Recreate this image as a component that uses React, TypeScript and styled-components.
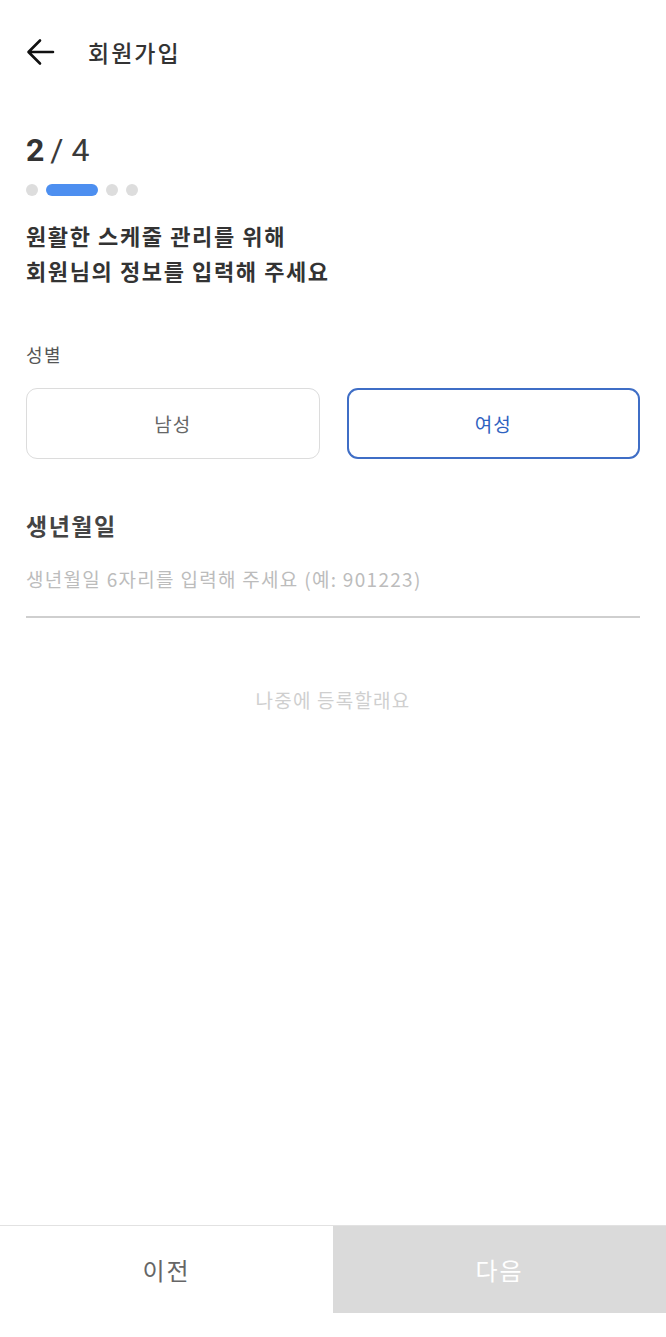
import React, { useState } from 'react'
import styled, { createGlobalStyle } from 'styled-components'

const GlobalStyle = createGlobalStyle`
  html, body {
    margin: 0;
    padding: 0;
    background: #fff;
  }
  body {
    font-family: 'Noto Sans CJK KR', 'Noto Sans', sans-serif;
    color: #333;
  }
  * {
    box-sizing: border-box;
  }
`

const Page = styled.div`
  width: 666px;
  min-height: 100vh;
  display: flex;
  flex-direction: column;
  padding-bottom: 24px;
`

const Header = styled.header`
  height: 104px;
  display: flex;
  align-items: center;
  padding: 0 26px;
  gap: 32px;
`

const BackButton = styled.button`
  border: 0;
  background: none;
  padding: 0;
  width: 30px;
  height: 30px;
  display: flex;
  align-items: center;
  justify-content: center;
  cursor: pointer;
`

const Title = styled.h1`
  margin: 0;
  font-size: 23px;
  letter-spacing: 2px;
  font-weight: 500;
  color: #333;
`

const Content = styled.main`
  flex: 1;
  padding: 0 26px;
  display: flex;
  flex-direction: column;
`

const Step = styled.div`
  margin-top: 26px;
  font-family: Roboto, 'Noto Sans', sans-serif;
  font-size: 32px;
  line-height: 40px;
  color: #333;

  b {
    font-weight: 700;
  }
  span {
    font-weight: 400;
    margin-left: 6px;
    color: #3a3a3a;
  }
`

const Dots = styled.div`
  display: flex;
  align-items: center;
  gap: 8px;
  margin-top: 14px;
`

const Dot = styled.span<{ $active?: boolean }>`
  height: 12px;
  width: ${({ $active }) => ($active ? '52px' : '12px')};
  border-radius: 6px;
  background: ${({ $active }) => ($active ? '#4d8ff0' : '#dddddd')};
`

const Lead = styled.p`
  margin: 22px 0 0;
  font-size: 22px;
  letter-spacing: 1.6px;
  line-height: 35px;
  font-weight: 700;
  color: #333;
`

const Label = styled.div`
  margin-top: 54px;
  font-size: 18px;
  letter-spacing: 1.5px;
  line-height: 24px;
  color: #555;
`

const Choices = styled.div`
  display: grid;
  grid-template-columns: 1fr 1fr;
  gap: 27px;
  margin-top: 22px;
`

const Choice = styled.button<{ $selected?: boolean }>`
  height: 71px;
  border-radius: 11px;
  background: #fff;
  border: ${({ $selected }) => ($selected ? '2px solid #3f6ec6' : '1.5px solid #dcdcdc')};
  color: ${({ $selected }) => ($selected ? '#2f62c0' : '#666')};
  font-family: inherit;
  font-size: 19px;
  letter-spacing: 1px;
  cursor: pointer;
`

const SectionTitle = styled.h2`
  margin: 50px 0 0;
  font-size: 23px;
  letter-spacing: 1.5px;
  line-height: 32px;
  font-weight: 700;
  color: #444;
`

const Input = styled.input`
  margin-top: 27px;
  width: 100%;
  border: 0;
  border-bottom: 2px solid #cfcfcf;
  padding: 0 0 24px;
  font-family: Lato, 'Noto Sans CJK KR', sans-serif;
  font-size: 19px;
  letter-spacing: 1.3px;
  line-height: 24px;
  color: #333;
  outline: none;
  background: transparent;

  &::placeholder {
    color: #bcbcbc;
    font-family: 'Noto Sans CJK KR', Lato, sans-serif;
  }
`

const LaterLink = styled.button`
  align-self: center;
  margin-top: 69px;
  padding: 0;
  border: 0;
  background: none;
  font-family: inherit;
  font-size: 19px;
  letter-spacing: 1.2px;
  line-height: 26px;
  color: #cfcfcf;
  cursor: pointer;
`

const Footer = styled.footer`
  display: grid;
  grid-template-columns: 1fr 1fr;
  border-top: 1.5px solid #e2e2e2;
  height: 88px;
`

const FooterButton = styled.button<{ $primary?: boolean }>`
  border: 0;
  background: ${({ $primary }) => ($primary ? '#dadada' : '#fff')};
  color: ${({ $primary }) => ($primary ? '#fff' : '#666')};
  font-family: inherit;
  font-size: 24px;
  letter-spacing: 2px;
  cursor: pointer;
`

export default function App() {
  const [gender, setGender] = useState<'male' | 'female'>('female')

  return (
    <Page>
      <GlobalStyle />
      <Header>
        <BackButton aria-label="뒤로">
          <svg width="30" height="30" viewBox="0 0 30 30" fill="none">
            <path d="M27 15H3M14 3.5L2.5 15L14 26.5" stroke="#111" strokeWidth="2.6" strokeLinecap="round" strokeLinejoin="round" />
          </svg>
        </BackButton>
        <Title>회원가입</Title>
      </Header>
      <Content>
        <Step>
          <b>2</b>
          <span>/ 4</span>
        </Step>
        <Dots>
          <Dot />
          <Dot $active />
          <Dot />
          <Dot />
        </Dots>
        <Lead>
          원활한 스케줄 관리를 위해
          <br />
          회원님의 정보를 입력해 주세요
        </Lead>
        <Label>성별</Label>
        <Choices>
          <Choice $selected={gender === 'male'} onClick={() => setGender('male')}>
            남성
          </Choice>
          <Choice $selected={gender === 'female'} onClick={() => setGender('female')}>
            여성
          </Choice>
        </Choices>
        <SectionTitle>생년월일</SectionTitle>
        <Input placeholder="생년월일 6자리를 입력해 주세요 (예: 901223)" />
        <LaterLink>나중에 등록할래요</LaterLink>
      </Content>
      <Footer>
        <FooterButton>이전</FooterButton>
        <FooterButton $primary>다음</FooterButton>
      </Footer>
    </Page>
  )
}
